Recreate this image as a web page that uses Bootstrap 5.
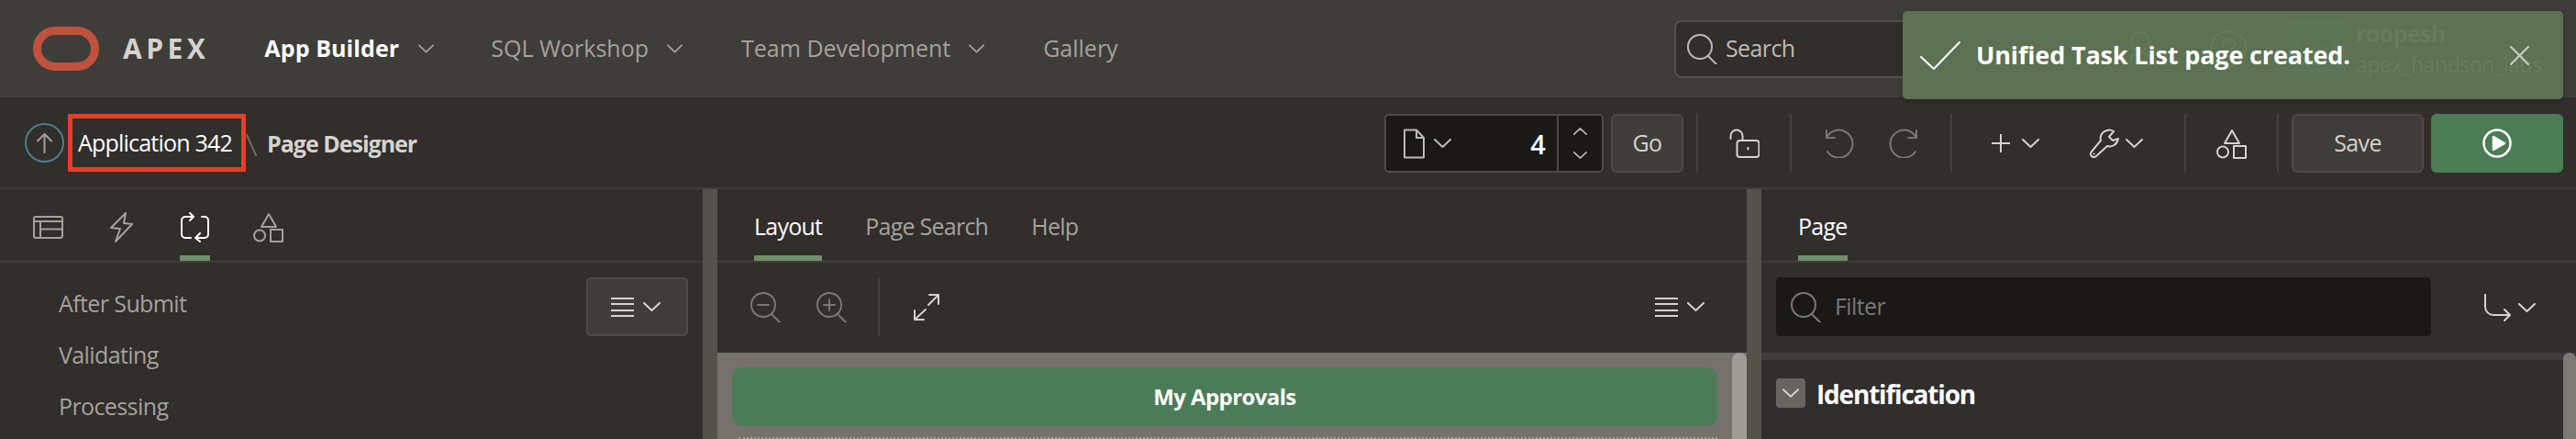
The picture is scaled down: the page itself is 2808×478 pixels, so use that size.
<!DOCTYPE html>
<html lang="en">
<head>
<meta charset="utf-8">
<title>Page Designer</title>
<link rel="stylesheet" href="https://cdn.jsdelivr.net/npm/bootstrap@5.3.0/dist/css/bootstrap.min.css">
<style>
html,body{height:100%;margin:0;background:#312e2b;overflow:hidden}
body{font-family:"Open Sans","Liberation Sans",sans-serif;font-size:25px;color:#a5a29c;letter-spacing:-.6px}
svg{display:block;flex:none;fill:none;stroke:currentColor;stroke-width:2;stroke-linecap:round;stroke-linejoin:round}
.ap-shell{height:478px;width:2808px}
.ap-top{height:106px;background:#3f3d39;padding-left:36px;flex:none}
.ap-brand{color:#d5d3ce;font-weight:700;font-size:30px;letter-spacing:4.500px;margin-left:26px;line-height:1}
.ap-logo{color:#c0513c;stroke-width:9}
.ap-nav{color:#a5a29c;text-decoration:none;white-space:nowrap;letter-spacing:0}
.ap-nav-on{color:#fff;font-weight:700;letter-spacing:.1px}
.ap-search{width:436px;height:63px;border:2px solid #55524d;border-radius:8px;background:#312e2b;margin-left:auto;padding-left:12px;gap:9px;color:#bdbab4}
.ap-person{margin-left:59px;color:#d5d3ce}
.ap-help{margin-left:63px;color:#d5d3ce}
.ap-avatar{width:63px;height:63px;margin-left:44px;background:#3f7596;color:#2a2826;font-weight:700;border-radius:2px}
.ap-user{margin-left:12px;width:240px;line-height:34px;color:#fff;white-space:nowrap;font-size:23px;letter-spacing:-.4px}
.ap-user b{display:block;font-weight:700;font-size:25px;letter-spacing:-.6px}
.ap-toast{top:12px;right:14px;width:720px;height:96px;background:rgba(94,117,83,.95);border-radius:5px;color:#fff;font-weight:700;font-size:27px;letter-spacing:-.15px;padding:0 37px 0 19px;box-shadow:0 2px 6px rgba(0,0,0,.25)}
.ap-toast svg{color:#fff}
.ap-toast .ap-close{color:#c9d1c3;margin-left:auto}
.ap-bar{height:100px;border-bottom:2px solid #3f3d39;padding:18px 14px 0 27px;flex:none}
.ap-mark{width:194px;height:63px;margin-left:4px;border:5px solid #e63f28;color:#fff;white-space:nowrap;letter-spacing:-.8px;padding-right:4px}
.ap-slash{color:#6f6c67;margin-left:0}
.ap-crumb{color:#d5d3ce;font-weight:700;margin-left:11px;white-space:nowrap;letter-spacing:-1px}
.ap-combo{width:239px;height:64px;background:#1a1917;border:2px solid #4e4b47;border-radius:5px;color:#bdbab4}
.ap-num{color:#fff;font-size:29px;width:116px;text-align:right;padding-right:13px;line-height:1;font-weight:600}
.ap-spin{width:49px;height:100%;border-left:2px solid #4e4b47;margin-left:auto;gap:18px}
.ap-btn{height:64px;background:#3f3d39;border:2px solid #4e4b47;border-radius:6px;color:#d5d3ce;font-size:25px;padding:0;letter-spacing:-.6px}
.ap-btn:hover{background:#3f3d39;color:#d5d3ce;border-color:#4e4b47}
.ap-go{width:79px;margin-left:8px}
.ap-save{width:144px;margin-left:14px}
.ap-run{width:144px;height:64px;background:#4b7c56;border-radius:6px;margin-left:8px;color:#fff}
.ap-vr{width:2px;height:64px;background:#44413d;flex:none}
.ap-ico{color:#d5d3ce}
.ap-dim{color:#7a7875}
.ap-main{height:272px;flex:none}
.ap-left{width:766px;flex:none}
.ap-mid{width:1122px;flex:none}
.ap-right{width:888px;flex:none}
.ap-split{width:16px;background:#55524d;flex:none}
.ap-tabs{height:80px;border-bottom:2px solid #3f3d39;flex:none}
.ap-tab{height:78px;padding-top:10px;border-bottom:6px solid transparent;color:#a5a29c;white-space:nowrap;letter-spacing:-.75px}
.ap-tab-on{border-bottom-color:#6f9068;color:#fff}
.ap-tools{height:98px;padding-top:16px;flex:none}
.ap-menu{height:64px;width:111px;background:#3f3d39;border:2px solid #4e4b47;border-radius:5px;gap:10px;color:#d5d3ce;padding-right:3px}
.ap-list{line-height:56px;padding:16px 0 0 64px}
.ap-burger{width:25px;height:21px;border-top:2px solid #d5d3ce;border-bottom:2px solid #d5d3ce;position:relative}
.ap-burger::before{content:"";display:block;height:8.5px;margin-top:4.5px;border-top:2px solid #d5d3ce;border-bottom:2px solid #d5d3ce}
.ap-canvas{background:#76716c;min-height:0;padding:16px 32px 0 16px}
.ap-green{height:64px;background:#4c7c57;border-radius:11px;color:#fff;font-weight:700;font-size:24px}
.ap-dots{margin:12px 0 0 7px;border-top:2px dotted #a9a6a1}
.ap-vbar{top:0;right:0;bottom:0;border-radius:10px 10px 0 0}
.ap-vbar-a{width:16px;background:#a09d98}
.ap-vbar-b{width:14px;background:#7b7a75}
.ap-filter{width:714px;height:64px;background:#1a1917;border-radius:5px;margin-left:16px;padding-left:16px;gap:15px;color:#7a7875}
.ap-band{height:8px;background:#3f3d39;flex:none}
.ap-acc{padding:20px 0 0 16px}
.ap-twist{width:32px;height:32px;background:#686560;border-radius:4px;color:#d5d3ce}
.ap-h{color:#fff;font-weight:700;font-size:28px;margin-left:12px;line-height:32px;margin-top:1px;letter-spacing:-1.2px}
</style>
</head>
<body>
<svg width="0" height="0" class="position-absolute">
  <symbol id="shapes" viewBox="0 0 33 33"><path d="M17 2 25 16H9Z"/><circle cx="7" cy="25.500" r="6"/><rect x="19" y="19" width="13" height="13"/></symbol>
  <symbol id="loupe" viewBox="0 0 33 33"><circle cx="14" cy="14" r="13"/><path d="M23 24 32 33"/></symbol>
  <symbol id="chev" viewBox="0 0 19 10"><path d="M1 1 9.500 9 18 1"/></symbol>
</svg>
<div class="ap-shell position-relative d-flex flex-column overflow-hidden">

  <header class="ap-top d-flex align-items-center">
    <svg class="ap-logo" width="72" height="48" viewBox="0 0 72 48"><rect x="4.500" y="4.500" width="63" height="39" rx="19.500"/></svg>
    <span class="ap-brand">APEX</span>
    <a class="ap-nav ap-nav-on" style="margin-left:60px">App Builder</a>
    <svg width="17" height="10" style="margin-left:21px"><use href="#chev"/></svg>
    <a class="ap-nav" style="margin-left:62px">SQL Workshop</a>
    <svg width="17" height="10" style="margin-left:20px"><use href="#chev"/></svg>
    <a class="ap-nav" style="margin-left:64px">Team Development</a>
    <svg width="17" height="10" style="margin-left:20px"><use href="#chev"/></svg>
    <a class="ap-nav" style="margin-left:64px">Gallery</a>
    <div class="ap-search d-flex align-items-center">
      <svg width="33" height="33"><use href="#loupe"/></svg><span>Search</span>
    </div>
    <svg class="ap-person" width="26" height="38" viewBox="0 0 26 38"><circle cx="13" cy="11" r="10"/><path d="M2 37c0-9 4-14 11-14s11 5 11 14"/></svg>
    <svg class="ap-help" width="40" height="40" viewBox="0 0 40 40"><circle cx="20" cy="20" r="19"/><path d="M14 15c1-7 13-7 13 0 0 5-7 5-7 11"/></svg>
    <div class="ap-avatar d-flex align-items-center justify-content-center">RO</div>
    <div class="ap-user"><b>roopesh</b>apex_handson_labs</div>
  </header>

  <div class="ap-toast position-absolute d-flex align-items-center">
    <svg width="44" height="31" viewBox="0 0 44 31"><path d="M1 17 15 30 43 1"/></svg>
    <span style="margin-left:17px">Unified Task List page created.</span>
    <svg class="ap-close" width="21" height="21" viewBox="0 0 21 21"><path d="M1 1 20 20M20 1 1 20"/></svg>
  </div>

  <div class="ap-bar d-flex align-items-start">
    <svg width="43" height="43" viewBox="0 0 43 43" style="margin-top:10px;color:#a5a29c"><circle cx="21.500" cy="21.500" r="20.500" stroke="#4b7d8d"/><path d="M21.500 32V12M14 19.500 21.500 12 29 19.500"/></svg>
    <div class="ap-mark d-flex align-items-center justify-content-center">Application 342</div>
    <svg class="ap-slash" width="12" height="24" viewBox="0 0 12 24" style="margin-top:22px"><path d="M1 1 11 23"/></svg>
    <span class="ap-crumb" style="line-height:64px">Page Designer</span>

    <div class="ms-auto d-flex align-items-center">
      <div class="ap-combo d-flex align-items-center">
        <svg width="24" height="33" viewBox="0 0 24 33" style="margin-left:18px"><path d="M2 1.500H15L23 10V31.500H2ZM15 1.500V10H23"/></svg>
        <svg width="19" height="10" style="margin-left:10px"><use href="#chev"/></svg>
        <span class="ap-num">4</span>
        <div class="ap-spin d-flex flex-column align-items-center justify-content-center">
          <svg width="15" height="8" style="transform:scaleY(-1)"><use href="#chev"/></svg>
          <svg width="15" height="8"><use href="#chev"/></svg>
        </div>
      </div>
      <button type="button" class="btn ap-btn ap-go">Go</button>
      <div class="ap-vr" style="margin-left:14px"></div>
      <svg class="ap-ico" width="33" height="32" viewBox="0 0 33 32" style="margin-left:34px"><path d="M1.500 11V8a6.500 6.500 0 0 1 13 0v5"/><rect x="8.500" y="13" width="24" height="18" rx="3"/><path d="M20.500 21v1.500"/></svg>
      <div class="ap-vr" style="margin-left:33px"></div>
      <svg class="ap-dim" width="32" height="32" viewBox="0 0 32 32" style="margin-left:36px"><path d="M2 2V10H11M2 10A15 15 0 1 1 3 25"/></svg>
      <svg class="ap-dim" width="32" height="32" viewBox="0 0 32 32" style="margin-left:38px;transform:scaleX(-1)"><path d="M2 2V10H11M2 10A15 15 0 1 1 3 25"/></svg>
      <div class="ap-vr" style="margin-left:35px"></div>
      <svg class="ap-ico" width="20" height="20" viewBox="0 0 20 20" style="margin-left:43px"><path d="M10 0V20M0 10H20"/></svg>
      <svg class="ap-ico" width="19" height="10" style="margin-left:13px"><use href="#chev"/></svg>
      <svg class="ap-ico" width="32" height="32" viewBox="0 0 32 32" style="margin-left:55px"><path d="M12 13 2 25a3.500 3.500 0 0 0 5 5L19 19c5 2 11-2 12-8l-6 2-4-4 5-6C20-1 10 4 12 13Z"/><path d="M4.500 27.500h.1"/></svg>
      <svg class="ap-ico" width="19" height="10" style="margin-left:7px"><use href="#chev"/></svg>
      <div class="ap-vr" style="margin-left:45px"></div>
      <svg class="ap-ico" width="33" height="33" style="margin-left:33px"><use href="#shapes"/></svg>
      <div class="ap-vr" style="margin-left:33px"></div>
      <button type="button" class="btn ap-btn ap-save">Save</button>
      <div class="ap-run d-flex align-items-center justify-content-center">
        <svg width="32" height="32" viewBox="0 0 32 32" style="stroke-width:2.500"><circle cx="16" cy="16" r="14.500"/><path d="M12 9 24 16 12 23Z" fill="#fff"/></svg>
      </div>
    </div>
  </div>

  <main class="ap-main d-flex">
    <section class="ap-left d-flex flex-column">
      <div class="ap-tabs d-flex">
        <div class="ap-tab d-flex align-items-center" style="margin-left:36px;color:#a5a29c"><svg width="33" height="25" viewBox="0 0 33 25"><rect x="1" y="1" width="31" height="23" rx="2"/><path d="M1 6H32M8 6V24M8 14.500H32"/></svg></div>
        <div class="ap-tab d-flex align-items-center" style="margin-left:51px"><svg width="25" height="33" viewBox="0 0 25 33"><path d="M17 1 1 17 11 18 6 32 24 13 15 12Z"/></svg></div>
        <div class="ap-tab ap-tab-on d-flex align-items-center" style="margin-left:51px"><svg width="33" height="33" viewBox="0 0 33 33"><path d="M15 5H6A4 4 0 0 0 2 9V24A4 4 0 0 0 6 28H12M11 1 15 5 11 9M24 5H27A4 4 0 0 1 31 9V24A4 4 0 0 1 27 28H17M22 23 17 28 22 32"/></svg></div>
        <div class="ap-tab d-flex align-items-center" style="margin-left:47px"><svg width="33" height="33"><use href="#shapes"/></svg></div>
      </div>
      <div class="d-flex justify-content-between align-items-start flex-grow-1">
        <div class="ap-list"><div>After Submit</div><div>Validating</div><div>Processing</div></div>
        <div class="ap-menu d-flex align-items-center justify-content-center" style="margin:16px 16px 0 0"><div class="ap-burger"></div><svg width="19" height="10"><use href="#chev"/></svg></div>
      </div>
    </section>
    <div class="ap-split"></div>
    <section class="ap-mid d-flex flex-column">
      <div class="ap-tabs d-flex">
        <div class="ap-tab ap-tab-on d-flex align-items-center" style="margin-left:40px">Layout</div>
        <div class="ap-tab d-flex align-items-center" style="margin-left:47px">Page Search</div>
        <div class="ap-tab d-flex align-items-center" style="margin-left:47px">Help</div>
      </div>
      <div class="ap-tools d-flex align-items-start">
        <svg class="ap-dim" width="33" height="33" viewBox="0 0 33 33" style="margin:16px 0 0 36px"><circle cx="14" cy="14" r="13"/><path d="M23 24 32 33M8 14H20"/></svg>
        <svg class="ap-dim" width="33" height="33" viewBox="0 0 33 33" style="margin:16px 0 0 39px"><circle cx="14" cy="14" r="13"/><path d="M23 24 32 33M8 14H20M14 8V20"/></svg>
        <div class="ap-vr" style="margin-left:34px"></div>
        <svg class="ap-ico" width="28" height="29" viewBox="0 0 28 29" style="margin:18px 0 0 37px"><path d="M1 28 13 17M1 18V28H11M27 1 16 12M17 1H27V11"/></svg>
        <div class="d-flex align-items-center ms-auto" style="gap:10px;height:64px;margin-right:46px;color:#d5d3ce"><div class="ap-burger"></div><svg width="19" height="10"><use href="#chev"/></svg></div>
      </div>
      <div class="ap-canvas flex-grow-1 position-relative">
        <div class="ap-green d-flex align-items-center justify-content-center">My Approvals</div>
        <div class="ap-dots"></div>
        <div class="ap-vbar ap-vbar-a position-absolute"></div>
      </div>
    </section>
    <div class="ap-split"></div>
    <section class="ap-right d-flex flex-column">
      <div class="ap-tabs d-flex">
        <div class="ap-tab ap-tab-on d-flex align-items-center" style="margin-left:40px">Page</div>
      </div>
      <div class="ap-tools d-flex align-items-start">
        <div class="ap-filter d-flex align-items-center"><svg width="33" height="33"><use href="#loupe"/></svg><span>Filter</span></div>
        <svg class="ap-ico" width="30" height="30" viewBox="0 0 30 30" style="margin:18px 0 0 58px"><path d="M1 0V14A9 9 0 0 0 10 23H28M22 17 28 23 22 29"/></svg>
        <svg class="ap-ico" width="19" height="10" style="margin:28px 0 0 7px"><use href="#chev"/></svg>
      </div>
      <div class="flex-grow-1 position-relative d-flex flex-column">
        <div class="ap-band"></div>
        <div class="ap-acc d-flex align-items-start">
          <div class="ap-twist d-flex align-items-center justify-content-center"><svg width="18" height="10"><use href="#chev"/></svg></div>
          <div class="ap-h">Identification</div>
        </div>
        <div class="ap-vbar ap-vbar-b position-absolute"></div>
      </div>
    </section>
  </main>
</div>
<script src="https://cdn.jsdelivr.net/npm/bootstrap@5.3.0/dist/js/bootstrap.bundle.min.js"></script>
</body>
</html>
